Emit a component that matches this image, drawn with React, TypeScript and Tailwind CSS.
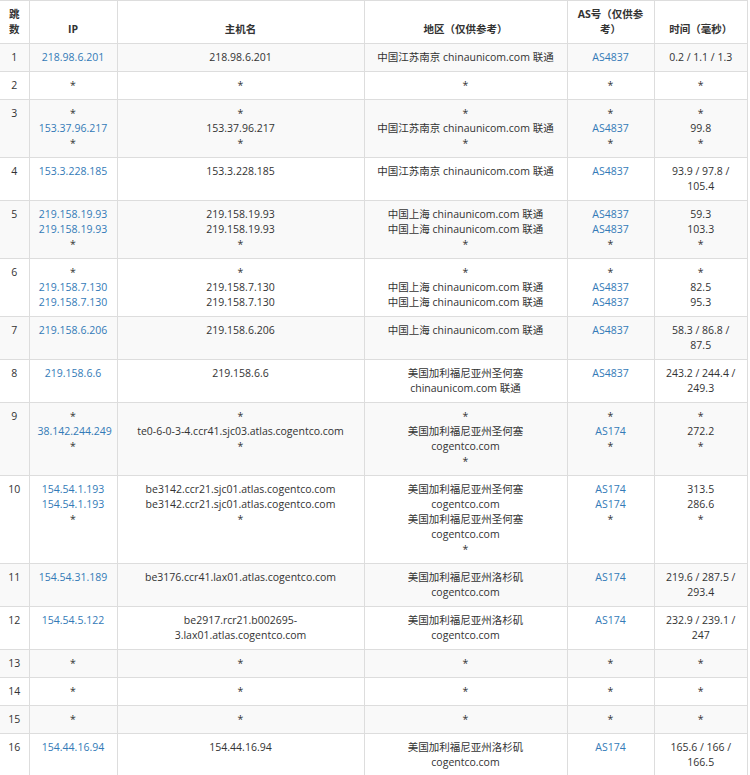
import * as React from 'react';

interface Hop {
    hop: number;
    ip: string[];
    host: string[];
    loc: string[];
    as: string[];
    time: string[];
}

const JS = '中国江苏南京 chinaunicom.com 联通';
const SH = '中国上海 chinaunicom.com 联通';
const SJ = '美国加利福尼亚州圣何塞 cogentco.com';
const LA = '美国加利福尼亚州洛杉矶 cogentco.com';

const hops: Hop[] = [
    { hop: 1, ip: ['218.98.6.201'], host: ['218.98.6.201'], loc: [JS], as: ['AS4837'], time: ['0.2 / 1.1 / 1.3'] },
    { hop: 2, ip: ['*'], host: ['*'], loc: ['*'], as: ['*'], time: ['*'] },
    { hop: 3, ip: ['*', '153.37.96.217', '*'], host: ['*', '153.37.96.217', '*'], loc: ['*', JS, '*'], as: ['*', 'AS4837', '*'], time: ['*', '99.8', '*'] },
    { hop: 4, ip: ['153.3.228.185'], host: ['153.3.228.185'], loc: [JS], as: ['AS4837'], time: ['93.9 / 97.8 / 105.4'] },
    { hop: 5, ip: ['219.158.19.93', '219.158.19.93', '*'], host: ['219.158.19.93', '219.158.19.93', '*'], loc: [SH, SH, '*'], as: ['AS4837', 'AS4837', '*'], time: ['59.3', '103.3', '*'] },
    { hop: 6, ip: ['*', '219.158.7.130', '219.158.7.130'], host: ['*', '219.158.7.130', '219.158.7.130'], loc: ['*', SH, SH], as: ['*', 'AS4837', 'AS4837'], time: ['*', '82.5', '95.3'] },
    { hop: 7, ip: ['219.158.6.206'], host: ['219.158.6.206'], loc: [SH], as: ['AS4837'], time: ['58.3 / 86.8 / 87.5'] },
    { hop: 8, ip: ['219.158.6.6'], host: ['219.158.6.6'], loc: ['美国加利福尼亚州圣何塞 chinaunicom.com 联通'], as: ['AS4837'], time: ['243.2 / 244.4 / 249.3'] },
    { hop: 9, ip: ['*', '38.142.244.249', '*'], host: ['*', 'te0-6-0-3-4.ccr41.sjc03.atlas.cogentco.com', '*'], loc: ['*', SJ, '*'], as: ['*', 'AS174', '*'], time: ['*', '272.2', '*'] },
    { hop: 10, ip: ['154.54.1.193', '154.54.1.193', '*'], host: ['be3142.ccr21.sjc01.atlas.cogentco.com', 'be3142.ccr21.sjc01.atlas.cogentco.com', '*'], loc: [SJ, SJ, '*'], as: ['AS174', 'AS174', '*'], time: ['313.5', '286.6', '*'] },
    { hop: 11, ip: ['154.54.31.189'], host: ['be3176.ccr41.lax01.atlas.cogentco.com'], loc: [LA], as: ['AS174'], time: ['219.6 / 287.5 / 293.4'] },
    { hop: 12, ip: ['154.54.5.122'], host: ['be2917.rcr21.b002695-3.lax01.atlas.cogentco.com'], loc: [LA], as: ['AS174'], time: ['232.9 / 239.1 / 247'] },
    { hop: 13, ip: ['*'], host: ['*'], loc: ['*'], as: ['*'], time: ['*'] },
    { hop: 14, ip: ['*'], host: ['*'], loc: ['*'], as: ['*'], time: ['*'] },
    { hop: 15, ip: ['*'], host: ['*'], loc: ['*'], as: ['*'], time: ['*'] },
    { hop: 16, ip: ['154.44.16.94'], host: ['154.44.16.94'], loc: [LA], as: ['AS174'], time: ['165.6 / 166 / 166.5'] },
];

const Lines: React.FC<{ items: string[]; link?: boolean }> = ({ items, link }) => (
    <>
        {items.map((s, i) => (
            <div key={i} className={link && s !== '*' ? 'text-[#337ab7]' : ''}>{s}</div>
        ))}
    </>
);

const td = 'border border-[#dddddd] px-[8px] py-[6px] align-top text-center';
const th = 'border border-[#dddddd] px-[8px] py-[6px] align-bottom text-center font-bold';

export default function App() {
    return (
        <div className="w-[750px] bg-white text-[10.5px] leading-[15px] text-[#333333]" style={{ fontFamily: '"Open Sans", "Noto Sans CJK SC", sans-serif' }}>
            <table className="w-[748px] table-fixed border-collapse">
                <thead>
                    <tr>
                        <th className={`${th} w-[29px] border-l-0`}>跳数</th>
                        <th className={`${th} w-[88px]`}>IP</th>
                        <th className={`${th} w-[247px]`}>主机名</th>
                        <th className={`${th} w-[203px]`}>地区（仅供参考）</th>
                        <th className={`${th} w-[87px]`}>AS号（仅供参考）</th>
                        <th className={th}>时间（毫秒）</th>
                    </tr>
                </thead>
                <tbody>
                    {hops.map((h, i) => (
                        <tr key={h.hop} className={i % 2 === 0 ? 'bg-[#f9f9f9]' : 'bg-white'}>
                            <td className={`${td} border-l-0`}>{h.hop}</td>
                            <td className={td}><Lines items={h.ip} link /></td>
                            <td className={td}><Lines items={h.host} /></td>
                            <td className={td}><Lines items={h.loc} /></td>
                            <td className={td}><Lines items={h.as} link /></td>
                            <td className={td}><Lines items={h.time} /></td>
                        </tr>
                    ))}
                </tbody>
            </table>
        </div>
    );
}
